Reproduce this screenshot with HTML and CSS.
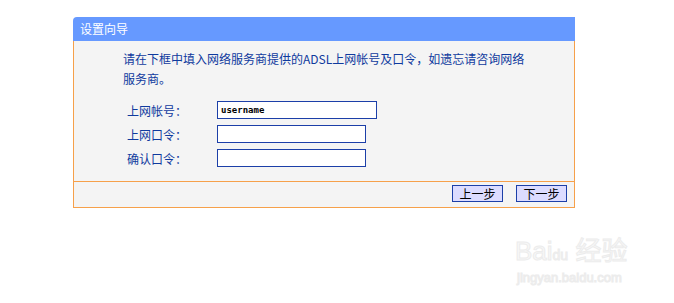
FILE: index.html
```html
<!DOCTYPE html>
<html lang="zh-CN">
<head>
    <meta charset="UTF-8">
    <title>设置向导</title>
    <link rel="stylesheet" href="styles.css">
</head>
<body>
    <div class="panel">
        <div class="panel-head">设置向导</div>
        <div class="panel-body">
            <p class="intro">请在下框中填入网络服务商提供的ADSL上网帐号及口令，如遗忘请咨询网络<br>服务商。</p>
            <div class="row">
                <label for="acc">上网帐号：</label>
                <input type="text" id="acc" class="wide" value="username">
            </div>
            <div class="row">
                <label for="pwd">上网口令：</label>
                <input type="password" id="pwd">
            </div>
            <div class="row">
                <label for="pwd2">确认口令：</label>
                <input type="password" id="pwd2">
            </div>
        </div>
        <div class="panel-foot">
            <button type="button">上一步</button>
            <button type="button">下一步</button>
        </div>
    </div>

    <div class="watermark">
        <div class="wm-logo">Bai<span class="paw">du</span> 经验</div>
        <div class="wm-url">jingyan.baidu.com</div>
    </div>
</body>
</html>
```

FILE: styles.css
```css
body {
    margin: 0;
    padding: 17px 0 0 73px;
    background-color: #fff;
    font-family: "Noto Sans CJK SC", "Liberation Sans", sans-serif;
    font-size: 12px;
}
.panel {
    width: 502px;
}
.panel-head {
    height: 24px;
    line-height: 24px;
    padding-left: 7px;
    background-color: #6699ff;
    color: #fff;
    border-top-left-radius: 4px;
}
.panel-body {
    background-color: #f4f4f4;
    border-left: 1px solid #f6a04a;
    border-right: 1px solid #f6a04a;
    padding: 8px 0 11px 49px;
}
.intro {
    margin: 0 0 9px 0;
    line-height: 20px;
    color: #0f3a9e;
}
.row {
    display: flex;
    align-items: center;
    height: 24px;
    padding-left: 4px;
}
.row label {
    width: 90px;
    color: #0f3a9e;
}
.row input {
    box-sizing: border-box;
    width: 149px;
    height: 18px;
    margin: 0;
    padding: 0 3px;
    border: 1px solid #1c3fa8;
    background-color: #fff;
    font-family: "DejaVu Sans Mono", monospace;
    font-size: 9px;
    font-weight: bold;
    color: #000;
    outline: none;
}
.row input.wide {
    width: 160px;
}
.panel-foot {
    display: flex;
    justify-content: flex-end;
    gap: 13px;
    height: 27px;
    padding: 3px 7px 0 0;
    box-sizing: border-box;
    background-color: #f4f4f4;
    border: 1px solid #f6a04a;
}
.panel-foot button {
    width: 51px;
    height: 17px;
    padding: 0;
    border: 1px solid #1c3fa8;
    background-color: #dcdcff;
    font-family: "Noto Sans CJK SC", sans-serif;
    font-size: 12px;
    line-height: 15px;
    color: #000;
}
.watermark {
    position: absolute;
    left: 515px;
    top: 236px;
    color: #f8f8f8;
    font-family: "Liberation Sans", "Noto Sans CJK SC", sans-serif;
    -webkit-text-stroke: 1px #ececec;
}
.wm-logo {
    font-size: 26px;
    line-height: 30px;
}
.paw {
    font-size: 14px;
}
.wm-url {
    font-size: 13px;
    padding-left: 2px;
}
```
